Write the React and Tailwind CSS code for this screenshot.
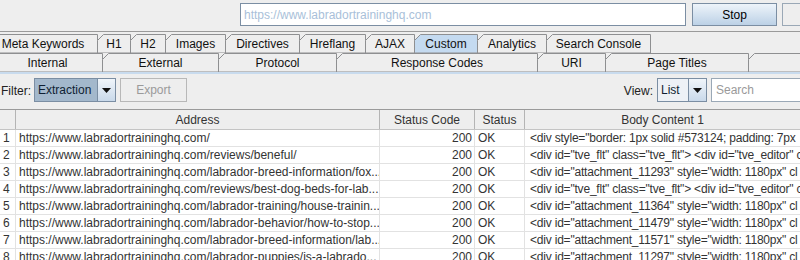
const row1 = [
  { label: 'Meta Keywords', x: -12, end: 97 },
  { label: 'H1', x: 97, end: 130 },
  { label: 'H2', x: 130, end: 165 },
  { label: 'Images', x: 165, end: 225 },
  { label: 'Directives', x: 225, end: 299 },
  { label: 'Hreflang', x: 299, end: 365 },
  { label: 'AJAX', x: 365, end: 414 },
  { label: 'Custom', x: 414, end: 477, selected: true },
  { label: 'Analytics', x: 477, end: 546 },
  { label: 'Search Console', x: 546, end: 650 },
]

const row2 = [
  { label: 'Internal', x: -8, end: 102 },
  { label: 'External', x: 102, end: 218 },
  { label: 'Protocol', x: 218, end: 336 },
  { label: 'Response Codes', x: 336, end: 537 },
  { label: 'URI', x: 537, end: 605 },
  { label: 'Page Titles', x: 605, end: 748 },
  { label: '', x: 748, end: 830 },
]

const rows = [
  ['https://www.labradortraininghq.com/', '<div style="border: 1px solid #573124; padding: 7px'],
  ['https://www.labradortraininghq.com/reviews/beneful/', '<div id="tve_flt" class="tve_flt"> <div id="tve_editor" cl'],
  ['https://www.labradortraininghq.com/labrador-breed-information/fox...', '<div id="attachment_11293" style="width: 1180px" cl'],
  ['https://www.labradortraininghq.com/reviews/best-dog-beds-for-lab...', '<div id="tve_flt" class="tve_flt"> <div id="tve_editor" cl'],
  ['https://www.labradortraininghq.com/labrador-training/house-trainin...', '<div id="attachment_11364" style="width: 1180px" cl'],
  ['https://www.labradortraininghq.com/labrador-behavior/how-to-stop...', '<div id="attachment_11479" style="width: 1180px" cl'],
  ['https://www.labradortraininghq.com/labrador-breed-information/lab...', '<div id="attachment_11571" style="width: 1180px" cl'],
  ['https://www.labradortraininghq.com/labrador-puppies/is-a-labrado...', '<div id="attachment_11297" style="width: 1180px" cl'],
]

function Tab({ tab, h }) {
  const w = tab.end - tab.x + 1
  return (
    <div className="relative shrink-0 -mr-px flex items-center justify-center" style={{ width: w, height: h }}>
      <svg className="absolute inset-0" width={w} height={h}>
        <polygon
          points={`0.5,${h} 0.5,6.5 6.5,0.5 ${w - 0.5},0.5 ${w - 0.5},${h}`}
          fill={tab.selected ? '#c4daf0' : '#eeeeee'}
          stroke="#8e8f91"
          strokeWidth="1"
        />
      </svg>
      <span className="relative text-[#111]">{tab.label}</span>
    </div>
  )
}

function TabRow({ tabs, h }) {
  return (
    <div className="flex overflow-hidden" style={{ height: h }}>
      <div className="flex shrink-0" style={{ marginLeft: tabs[0].x }}>
        {tabs.map((t) => (
          <Tab key={t.label + t.x} tab={t} h={h} />
        ))}
      </div>
    </div>
  )
}

function Arrow() {
  return (
    <svg width="9" height="5" viewBox="0 0 9 5">
      <polygon points="0,0 9,0 4.5,5" fill="#111" />
    </svg>
  )
}

export default function App() {
  return (
    <div className="w-[800px] h-[260px] overflow-hidden bg-[#eeeeee] text-[12px] leading-none text-[#222]" style={{ fontFamily: '"Liberation Sans", Arial, sans-serif' }}>
      {/* toolbar */}
      <div className="flex h-[32px] overflow-hidden border-b border-[#9a9a9a] pt-[3px]">
        <div className="ml-[240px] flex h-[23px] w-[446px] shrink-0 items-center border border-[#7b8ea3] bg-white pl-[3px] text-[#a9bfd9]">
          https://www.labradortraininghq.com
        </div>
        <div className="ml-[6px] flex h-[23px] w-[85px] shrink-0 items-center justify-center border border-[#7b8ea3] bg-gradient-to-b from-[#eef4fa] to-[#bcd1e6] text-black">
          Stop
        </div>
        <div className="ml-[5px] h-[23px] w-[40px] shrink-0 border border-[#9aa8b6] bg-[#eeeeee]" />
      </div>

      {/* tabs */}
      <div className="mt-[2px]">
        <TabRow tabs={row1} h={19} />
        <TabRow tabs={row2} h={19} />
      </div>
      <div className="h-[2px] bg-[#c8dbee]" />

      {/* filter bar */}
      <div className="flex h-[32px] items-center overflow-hidden">
        <span className="ml-px pt-[2px]">Filter:</span>
        <div className="ml-[3px] flex h-[24px] w-[82px] shrink-0 border border-[#7b8ea3]">
          <div className="flex flex-1 items-center bg-[#a3b8cc] pl-[3px] text-[#0f1f33]">Extraction</div>
          <div className="flex w-[18px] items-center justify-center border-l border-[#7b8ea3] bg-gradient-to-b from-[#f0f5fa] to-[#c9d9ea]">
            <Arrow />
          </div>
        </div>
        <div className="ml-[4px] flex h-[24px] w-[67px] shrink-0 items-center justify-center border border-[#b8b8b8] text-[#9a9a9a]">
          Export
        </div>
        <span className="ml-auto pt-[2px]">View:</span>
        <div className="ml-[4px] flex h-[24px] w-[50px] shrink-0 border border-[#7b8ea3]">
          <div className="flex flex-1 items-center bg-[#edf1f6] pl-[3px] text-[#0f1f33]">List</div>
          <div className="flex w-[18px] items-center justify-center border-l border-[#7b8ea3] bg-gradient-to-b from-[#f0f5fa] to-[#c9d9ea]">
            <Arrow />
          </div>
        </div>
        <div className="ml-[4px] mr-[-12px] flex h-[24px] w-[101px] shrink-0 items-center border border-[#9aa8b6] bg-white pl-[4px] text-[#9a9a9a]">
          Search
        </div>
      </div>

      {/* table */}
      <div className="mt-[3px] border-t border-[#9a9a9a]">
        <div className="grid h-[20px] grid-cols-[16px_364px_95px_50px_1fr] border-b border-[#c4c4c4] bg-[#eeeeee] text-[#333]">
          <div className="border-r border-[#b4b4b4]" />
          <div className="flex items-center justify-center border-r border-[#b4b4b4]">Address</div>
          <div className="flex items-center justify-center border-r border-[#b4b4b4]">Status Code</div>
          <div className="flex items-center justify-center border-r border-[#b4b4b4]">Status</div>
          <div className="flex items-center justify-center">Body Content 1</div>
        </div>
        <div className="bg-white text-[#333]">
          {rows.map((r, i) => (
            <div key={i} className="grid h-[17px] grid-cols-[16px_364px_95px_50px_1fr] border-b border-[#e2e2e2]">
              <div className="flex items-center border-r border-[#e2e2e2] pl-[3px]">{i + 1}</div>
              <div className="flex items-center overflow-hidden whitespace-nowrap border-r border-[#e2e2e2] pl-[3px]">{r[0]}</div>
              <div className="flex items-center justify-end border-r border-[#e2e2e2] pr-[2px]">200</div>
              <div className="flex items-center border-r border-[#e2e2e2] pl-[3px]">OK</div>
              <div className="flex items-center overflow-hidden whitespace-nowrap pl-[5px] tracking-[-0.2px]">{r[1]}</div>
            </div>
          ))}
        </div>
      </div>
    </div>
  )
}
